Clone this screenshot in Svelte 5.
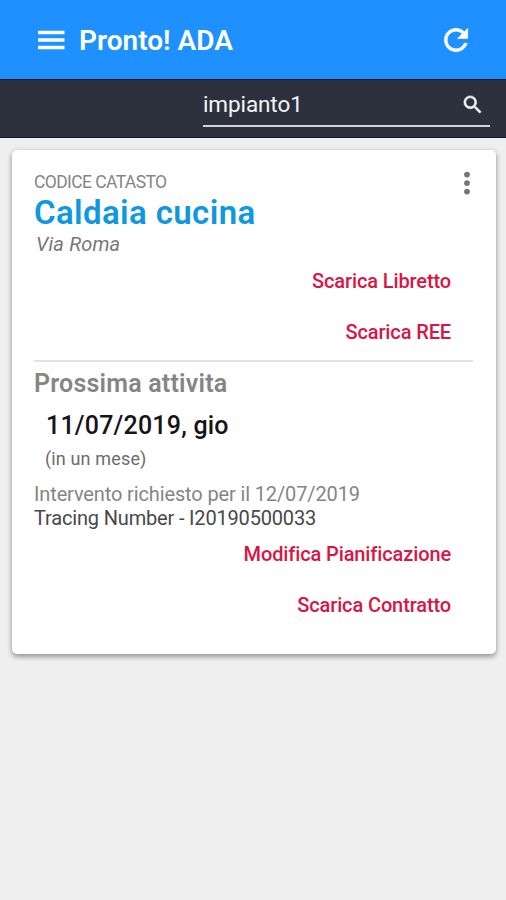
<script lang="ts">
	let query = $state('impianto1');

	const plant = {
		label: 'CODICE CATASTO',
		name: 'Caldaia cucina',
		address: 'Via Roma'
	};

	const activity = {
		date: '11/07/2019, gio',
		distance: '(in un mese)',
		request: 'Intervento richiesto per il 12/07/2019',
		tracing: 'Tracing Number - I20190500033'
	};

	const documents = ['Scarica Libretto', 'Scarica REE'];
	const actions = ['Modifica Pianificazione', 'Scarica Contratto'];
</script>

<div class="screen">
	<header class="toolbar">
		<button class="icon-button" aria-label="Menu">
			<svg width="28" height="20" viewBox="0 0 28 20" fill="currentColor">
				<path d="M1 .7h26.5v3.6H1zM1 8.2h26.5v3.6H1zM1 15.7h26.5v3.6H1z" />
			</svg>
		</button>
		<h1>Pronto! ADA</h1>
		<button class="icon-button refresh" aria-label="Aggiorna">
			<svg width="34" height="34" viewBox="0 0 512 512" fill="currentColor">
				<path
					d="M256 388c-72.6 0-132-59.4-132-132s59.4-132 132-132c36.3 0 69.3 15.4 92.4 39.6L278 234h154V80l-51.7 51.7C348.4 99.8 304.4 80 256 80c-96.8 0-176 79.2-176 176s78.1 176 176 176c81 0 148.3-54.1 169.4-128h-46.5c-18.8 49.6-67.2 84-122.9 84z"
					stroke="currentColor"
					stroke-width="9"
				/>
			</svg>
		</button>
	</header>

	<div class="search-bar">
		<label class="search-field">
			<input type="text" aria-label="Cerca" bind:value={query} />
			<svg width="23" height="23" viewBox="0 0 512 512" fill="currentColor">
				<path
					d="M337.5 305.4H320l-6.6-5.5c20.8-25.2 34-57 34-93.3C347.4 127.6 283.9 64 205.1 64 127.5 64 64 127.6 64 206.6s63.5 142.7 142.2 142.7c35 0 67.9-13.2 93-34l6.6 5.4v17.6L415.2 448l32.8-32.9zm-131.3 0c-54.7 0-98.4-43.9-98.4-98.8 0-54.8 43.7-98.7 98.4-98.7s98.5 43.9 98.5 98.7c0 54.9-43.8 98.8-98.5 98.8z"
					stroke="currentColor"
					stroke-width="12"
				/>
			</svg>
		</label>
	</div>

	<main class="card">
		<div class="card-head">
			<div>
				<p class="label">{plant.label}</p>
				<h2>{plant.name}</h2>
				<p class="address">{plant.address}</p>
			</div>
			<button class="icon-button more" aria-label="Altro">
				<svg width="8" height="26" viewBox="0 0 8 26" fill="currentColor">
					<circle cx="4" cy="4.6" r="2.9" />
					<circle cx="4" cy="13.1" r="2.9" />
					<circle cx="4" cy="21.6" r="2.9" />
				</svg>
			</button>
		</div>

		<div class="links">
			{#each documents as text}
				<button class="link">{text}</button>
			{/each}
		</div>

		<section>
			<h3>Prossima attivita</h3>
			<p class="date">{activity.date}</p>
			<p class="distance">{activity.distance}</p>
			<p class="request">{activity.request}</p>
			<p class="tracing">{activity.tracing}</p>
		</section>

		<div class="links">
			{#each actions as text}
				<button class="link">{text}</button>
			{/each}
		</div>
	</main>
</div>

<style>
	:global(body) {
		background: #efefef;
	}

	.screen {
		min-height: 900px;
		background: #efefef;
		font-family: Roboto, 'Liberation Sans', sans-serif;
	}

	h1,
	h2,
	h3,
	p {
		margin: 0;
		white-space: nowrap;
	}

	button {
		padding: 0;
		border: 0;
		background: none;
		font-family: inherit;
	}

	svg {
		display: block;
	}

	.toolbar {
		display: flex;
		align-items: center;
		box-sizing: border-box;
		height: 79px;
		padding: 1px 33px 0 37px;
		background: #1e90ff;
		color: #fff;
	}

	.toolbar h1 {
		margin-left: 14px;
		padding-top: 1px;
		font-size: 28px;
		font-weight: 600;
		line-height: 32px;
	}

	.icon-button {
		color: inherit;
	}

	.refresh {
		margin-left: auto;
	}

	.search-bar {
		display: flex;
		justify-content: flex-end;
		box-sizing: border-box;
		height: 59px;
		padding: 8px 16px 0 0;
		border-top: 1px solid #10152b;
		border-bottom: 1px solid #10112e;
		background: #2d313d;
	}

	.search-field {
		display: flex;
		align-items: center;
		box-sizing: border-box;
		width: 287px;
		height: 39px;
		padding: 0 6px 4px 0;
		border-bottom: 2px solid #d0d3dc;
		color: #f4f5f8;
	}

	.search-field input {
		flex: 1;
		min-width: 0;
		padding: 0 0 2px;
		border: 0;
		outline: 0;
		background: none;
		color: inherit;
		font-family: inherit;
		font-size: 22.5px;
		letter-spacing: -0.1px;
	}

	.card {
		box-sizing: border-box;
		height: 504px;
		margin: 12px 10px 0 12px;
		padding: 20px 23px 0 22px;
		border-radius: 5px;
		background: #fff;
		box-shadow:
			0 3px 5px rgb(0 0 0 / 28%),
			0 1px 6px rgb(0 0 0 / 16%);
	}

	.card-head {
		display: flex;
		justify-content: space-between;
	}

	.more {
		align-self: flex-start;
		margin-right: 2px;
		color: #757575;
	}

	.label {
		color: #858585;
		font-size: 17.5px;
		letter-spacing: -0.6px;
		line-height: 24px;
	}

	h2 {
		color: #0f98e0;
		font-size: 33px;
		font-weight: 600;
		letter-spacing: 0.38px;
		line-height: 37px;
	}

	.address {
		margin-left: 2px;
		color: #777;
		font-size: 20px;
		font-style: italic;
		letter-spacing: 0.15px;
		line-height: 26px;
	}

	.links {
		display: flex;
		flex-direction: column;
		align-items: flex-end;
		padding-right: 22px;
	}

	.link {
		height: 50.5px;
		color: #d81545;
		font-size: 20px;
		font-weight: 500;
		letter-spacing: -0.12px;
		line-height: 48px;
		white-space: nowrap;
	}

	.card-head + .links {
		margin-top: -1px;
	}

	section {
		margin-top: 3px;
		padding-top: 6px;
		border-top: 2px solid #e2e2e2;
	}

	h3 {
		color: #858585;
		font-size: 25px;
		font-weight: 600;
		letter-spacing: 0.2px;
		line-height: 32px;
	}

	.date {
		margin: 8px 0 0 12px;
		color: #151515;
		font-size: 25px;
		font-weight: 500;
		letter-spacing: 0.2px;
		line-height: 36px;
	}

	.distance {
		margin-left: 11px;
		color: #6c6c6c;
		font-size: 18px;
		letter-spacing: 0.15px;
		line-height: 30px;
	}

	.request {
		margin-top: 8px;
		color: #858585;
		font-size: 20px;
		letter-spacing: -0.13px;
		line-height: 24px;
	}

	.tracing {
		color: #484848;
		font-size: 20px;
		letter-spacing: -0.17px;
		line-height: 24px;
	}

	section + .links {
		margin-top: -1px;
	}
</style>
